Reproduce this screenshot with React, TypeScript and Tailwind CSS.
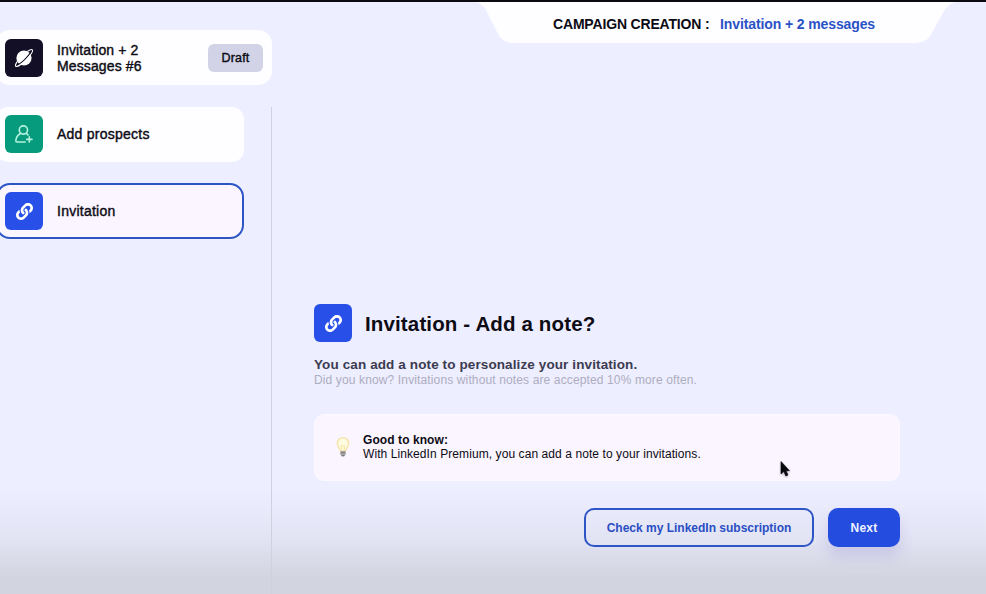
import type { ReactNode } from "react";
import { FaLink } from "react-icons/fa";

function App() {
  return (
    <div className="relative flex h-[594px] w-[986px] flex-col overflow-hidden border-t-2 border-[#0b0a10] bg-[#edeeff] font-['Liberation_Sans',Arial,sans-serif] text-[#0d0b14]">
      <BottomShade />
      <CampaignTitle />

      <div className="relative flex flex-1 pt-7">
        <Sidebar />
        <InvitationStep />
      </div>

      <Pointer />
    </div>
  );
}

const BottomShade = () => (
  <div className="absolute inset-x-0 bottom-0 h-[104px] bg-linear-to-b from-[#edeeff] via-[#e2e3f3] via-48% to-[#d2d4df] to-85%" />
);

const CampaignTitle = () => (
  <header className="absolute top-0 left-[470px] z-10 h-[41px] w-[500px]">
    <svg
      className="absolute inset-0"
      width="500"
      height="41"
      viewBox="0 0 500 41"
      fill="#fefdff"
    >
      <path d="M5 0C11 1 15 5 18 12L27 30C31 38 36 41 45 41H443C452 41 458 39 462 31L473 11C476 5 480 1 487 0Z" />
    </svg>
    <div className="relative flex h-full items-center pt-[3px] pl-[83px] text-[14px] font-bold whitespace-nowrap">
      <span className="w-[167px] tracking-[-0.17px]">CAMPAIGN CREATION :</span>
      <span className="tracking-[-0.11px] text-[#2a52c6]">
        Invitation + 2 messages
      </span>
    </div>
  </header>
);

const Sidebar = () => (
  <aside className="-ml-1 flex w-[276px] shrink-0 flex-col">
    <div className="flex h-[55px] items-center rounded-[14px] bg-[#fefdff] px-[9px]">
      <IconTile className="bg-[#120f26]">
        <PlanetIcon />
      </IconTile>
      <p className="ml-[14px] flex-1 pt-px text-[14px] leading-4 tracking-[0.12px] [-webkit-text-stroke:0.4px]">
        Invitation + 2
        <br />
        Messages #6
      </p>
      <span className="flex h-[28px] w-[55px] items-center justify-center rounded-md bg-[#d2d3e6] pt-px text-[12.5px] tracking-[0.2px] [-webkit-text-stroke:0.4px]">
        Draft
      </span>
    </div>

    <div className="mt-[22px] flex flex-1 flex-col gap-[21px] border-r border-[#d0d1de] pr-[27px]">
      <div className="flex h-[55px] items-center rounded-[12px] bg-[#fefdff] px-[9px] pb-px">
        <IconTile className="bg-[#059b7c]">
          <AddUserIcon />
        </IconTile>
        <StepLabel>Add prospects</StepLabel>
      </div>
      <div className="flex h-[56px] items-center rounded-[14px] border-2 border-[#2d55c5] bg-[#faf5ff] px-[7px]">
        <IconTile className="bg-[#2850e8]">
          <FaLink size={17} color="#fff" />
        </IconTile>
        <StepLabel>Invitation</StepLabel>
      </div>
    </div>
  </aside>
);

const InvitationStep = () => (
  <main className="ml-[42px] flex w-[586px] flex-col pt-[274px]">
    <div className="flex items-center">
      <IconTile className="bg-[#2850e8]">
        <FaLink size={17} color="#fff" />
      </IconTile>
      <h1 className="ml-[13px] pt-0.5 text-[20.5px] font-bold tracking-[0.14px] whitespace-nowrap">
        Invitation - Add a note?
      </h1>
    </div>

    <p className="pt-[15px] text-[13.5px] leading-4 font-bold tracking-[0.11px] text-[#3c3b50]">
      You can add a note to personalize your invitation.
    </p>
    <p className="text-[12px] leading-[15px] tracking-[0.13px] text-[#adadc0]">
      Did you know? Invitations without notes are accepted 10% more often.
    </p>

    <div className="mt-[26px] flex h-[67px] items-center rounded-[10px] border border-[#fcf9ff] bg-[#faf5ff] pb-px pl-5">
      <BulbIcon />
      <div className="ml-[12px] text-[12px] leading-[14px] tracking-[0.08px]">
        <p className="font-bold">Good to know:</p>
        <p>With LinkedIn Premium, you can add a note to your invitations.</p>
      </div>
    </div>

    <div className="mt-[27px] flex justify-end gap-[14px] text-[12px] font-bold">
      <button className="h-[39px] w-[230px] rounded-[10px] border-2 border-[#2d55c5] pt-px text-[#2a4fc4]">
        Check my LinkedIn subscription
      </button>
      <button className="h-[39px] w-[72px] rounded-[10px] bg-[#244de0] pt-px tracking-[0.2px] text-[#edf1ff] shadow-[0_10px_14px_rgba(150,145,215,0.28)]">
        Next
      </button>
    </div>
  </main>
);

interface IconTileProps {
  className: string;
  children: ReactNode;
}

const IconTile = ({ className, children }: IconTileProps) => (
  <div
    className={`flex size-[38px] shrink-0 items-center justify-center rounded-[6px] ${className}`}
  >
    {children}
  </div>
);

const StepLabel = ({ children }: { children: ReactNode }) => (
  <span className="ml-[14px] pt-px text-[14px] tracking-[0.25px] [-webkit-text-stroke:0.4px]">
    {children}
  </span>
);

const PlanetIcon = () => (
  <svg width="20" height="20" viewBox="0 0 20 20" fill="none">
    <circle cx="10" cy="10" r="7.6" fill="#fff" />
    <path d="M3 17.2C7 16 15.5 7.5 17.2 3" stroke="#120f26" strokeWidth="1.3" />
    <path
      d="M3.2 13.6C1.7 15.8 1 17.6 1.8 18.3C3 19.2 7.6 16.3 12 11.8C16.4 7.4 19.3 3 18.3 1.8C17.6 1.1 15.8 1.8 13.7 3.2"
      stroke="#fff"
      strokeWidth="1.1"
      strokeLinecap="round"
    />
  </svg>
);

const AddUserIcon = () => (
  <svg
    width="20"
    height="20"
    viewBox="0 0 20 20"
    fill="none"
    stroke="#b5f3df"
    strokeWidth="1.6"
    strokeLinecap="round"
    strokeLinejoin="round"
  >
    <circle cx="9.4" cy="6" r="4.1" />
    <path d="M6.5 9.5C3.5 11 2 13.5 1.8 17C1.8 17.7 2.2 18 3 18H11.2M12.2 9.5C13 9.9 13.6 10.4 14 11" />
    <path d="M15.3 12.7V18M12.7 15.4H18" />
  </svg>
);

const BulbIcon = () => (
  <svg width="16" height="22" viewBox="0 0 16 22" fill="none">
    <path
      d="M8 1.8C4.5 1.8 2.4 4.3 2.4 7.3C2.4 10.3 4.7 11.7 5.4 14.8H10.6C11.3 11.7 13.6 10.3 13.6 7.3C13.6 4.3 11.5 1.8 8 1.8Z"
      fill="#fffbe0"
      stroke="#f6e4ae"
      strokeWidth="1.6"
    />
    <path d="M6.6 14V9.5L8 10.5L9.4 9.5V14" stroke="#f3dfa0" strokeWidth="0.8" />
    <path d="M5.3 15H10.7V18.5L9 20.5H7L5.3 18.5Z" fill="#aaa9a8" />
    <path d="M5.8 16.8H10.2M6.6 19.6H9.4" stroke="#6f6e75" strokeWidth="0.9" />
  </svg>
);

const Pointer = () => (
  <svg
    className="absolute top-[458px] left-[779px] drop-shadow-[0_1px_1px_rgba(0,0,0,0.3)]"
    width="12"
    height="18"
    viewBox="0 0 12 18"
  >
    <path
      d="M2 1.5V14L4.8 11.4L6.8 16L9 15L7 10.7H10.5Z"
      fill="#08070c"
      stroke="#08070c"
      strokeWidth="0.6"
    />
  </svg>
);

export default App;
